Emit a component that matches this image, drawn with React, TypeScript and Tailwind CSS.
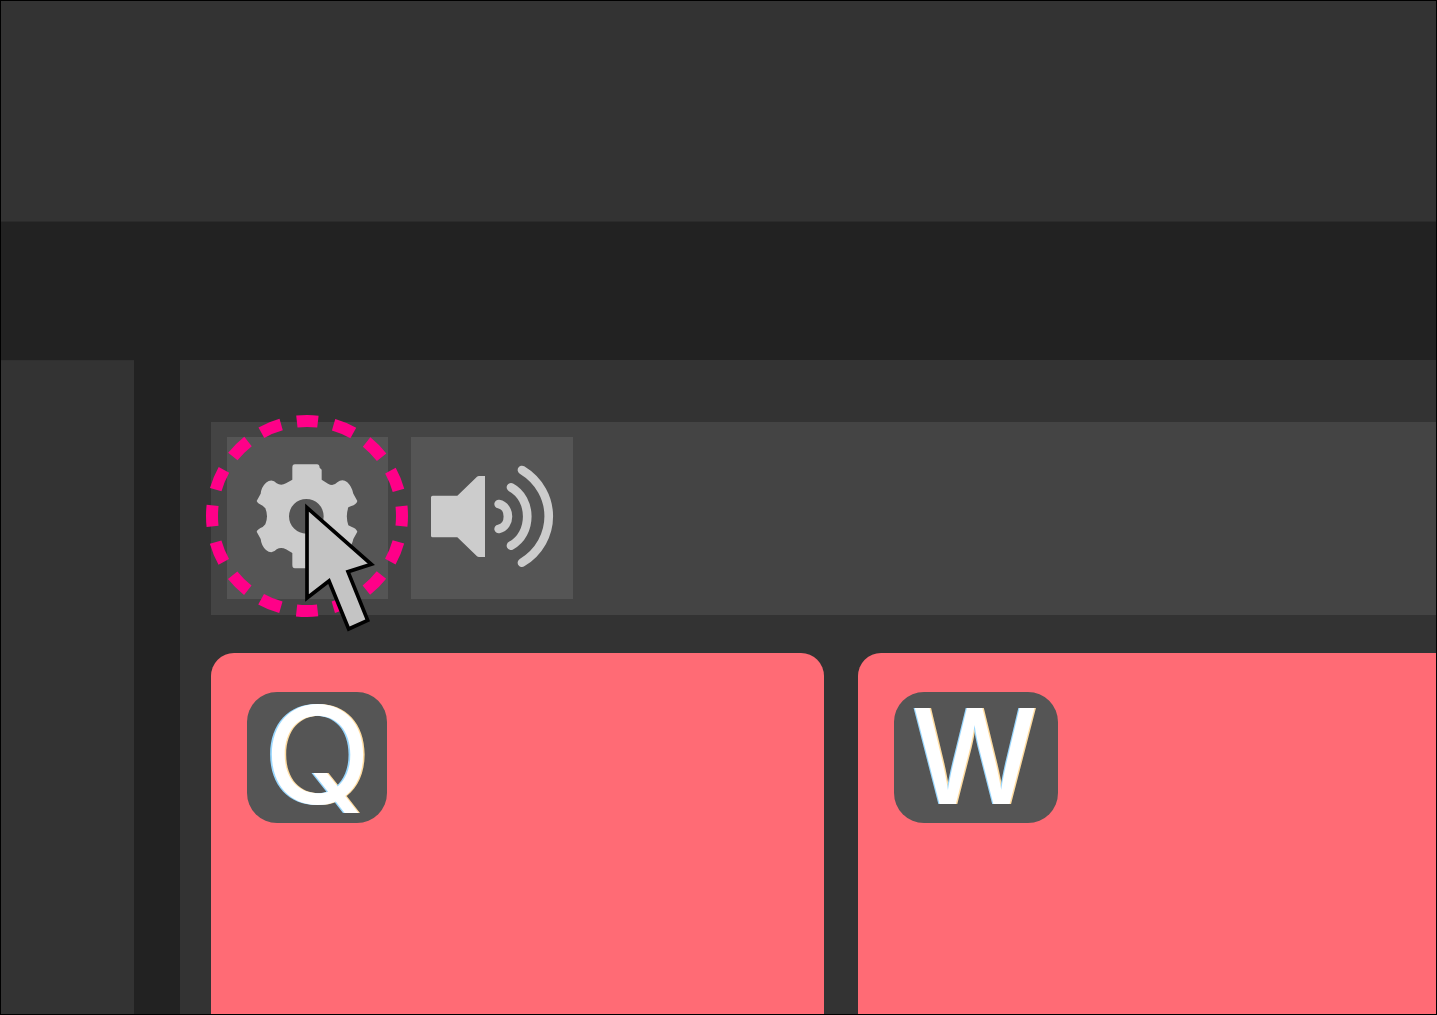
function GearIcon() {
  return (
    <svg viewBox="93 96 486 486" className="block h-[162px] w-[162px] max-w-none" fill="#cccccc" aria-hidden="true">
      <path
        fillRule="evenodd"
        d="M297 178 H363 Q370 178 371 188 L377 194 V224 L396 236 Q411 246 424 232 Q439 220 454 232 Q468 246 472 266 L484 288 Q481 299 466 303 L457 307 Q448 334 457 361 L466 365 Q481 370 484 380 L472 402 Q468 422 454 436 Q439 448 424 436 Q411 422 396 432 L377 444 V474 L371 480 Q370 490 363 490 H297 Q289 490 289 480 V444 L270 433 Q255 425 242 433 Q228 449 210 435 Q196 422 194 402 L182 380 Q185 372 200 366 L208 358 Q218 334 208 310 L200 302 Q185 296 182 288 L194 266 Q196 246 210 233 Q228 219 242 235 Q255 243 270 235 L289 224 V188 Q289 178 297 178 Z M331 282 A52 52 0 1 0 331 386 A52 52 0 1 0 331 282 Z"
      />
    </svg>
  );
}

function SpeakerIcon() {
  return (
    <svg viewBox="18 21 486 486" className="block h-[162px] w-[162px] max-w-none" aria-hidden="true">
      <path
        fill="#cccccc"
        d="M83 197 H157 L216 140 Q218 138 222 138 H240 V381 H222 Q218 381 216 379 L157 322 H83 Q78 322 78 317 V202 Q78 197 83 197 Z"
      />
      <g fill="none" stroke="#cccccc" strokeWidth="26" strokeLinecap="round">
        <path d="M281 222 C318 229 318 290 281 297" />
        <path d="M318 172 C383 207 383 312 318 347" />
        <path d="M351 120 C458 185 458 333 351 398" />
      </g>
    </svg>
  );
}

function Pointer() {
  return (
    <svg viewBox="0 0 660 720" className="pointer-events-none absolute -left-[15px] -top-[17px] h-[240px] w-[220px]" aria-hidden="true">
      <circle cx="333" cy="333" r="285" fill="none" stroke="#ff0088" strokeWidth="36" strokeDasharray="64 47.919" strokeDashoffset="33" />
      <path
        d="M333 308 L526 478 L456 500 L515 646 L458 672 L399 528 L333 579 Z"
        fill="#c4c4c4"
        stroke="#000"
        strokeWidth="11"
      />
    </svg>
  );
}

function KeyCard({ letter, badge, glyph, card }: { letter: string; badge: string; glyph: string; card: string }) {
  return (
    <div className={`shrink-0 rounded-t-[23px] bg-[#ff6b75] pl-[35.5px] pt-[39px] ${card}`}>
      <div className={`flex h-[131px] items-center justify-center rounded-[30px] bg-[#555555] text-[132px] leading-none text-white [text-shadow:-1.5px_0_#9ad8ff,1.5px_0_#ffdca0] ${badge}`}>
        <span className={glyph}>{letter}</span>
      </div>
    </div>
  );
}

export default function App() {
  return (
    <div className="flex h-[1015px] w-[1437px] flex-col overflow-hidden border border-black bg-[#222222] font-[Inter,sans-serif]">
      <header className="h-[221px] shrink-0 border-b border-[#2b2b2b] bg-[#333333]" />
      <div className="mt-[138px] flex min-h-0 flex-1">
        <aside className="w-[133px] shrink-0 border-t border-[#303030] bg-[#333333]" />
        <main className="ml-[46px] flex min-w-0 flex-1 flex-col bg-[#333333] pl-[31px] pt-[62px]">
          <div className="relative flex h-[193px] shrink-0 gap-[23px] bg-[#444444] pl-4 pt-[15px]">
            <button aria-label="Settings" className="h-[162px] w-[161px] bg-[#555555]">
              <GearIcon />
            </button>
            <button aria-label="Sound" className="h-[162px] w-[162px] bg-[#555555]">
              <SpeakerIcon />
            </button>
            <Pointer />
          </div>
          <div className="mt-[38px] flex min-h-0 flex-1 gap-[34px] overflow-hidden">
            <KeyCard
              letter="Q"
              card="w-[613px]"
              badge="w-[140.5px]"
              glyph="translate-x-[1px] -translate-y-[3px] scale-x-[1.07] scale-y-[1.03] font-normal"
            />
            <KeyCard
              letter="W"
              card="w-[613px] rounded-r-none"
              badge="w-[164.5px]"
              glyph="-translate-x-[1.5px] -translate-y-[2.5px] scale-x-[0.95] font-medium"
            />
          </div>
        </main>
      </div>
    </div>
  );
}
